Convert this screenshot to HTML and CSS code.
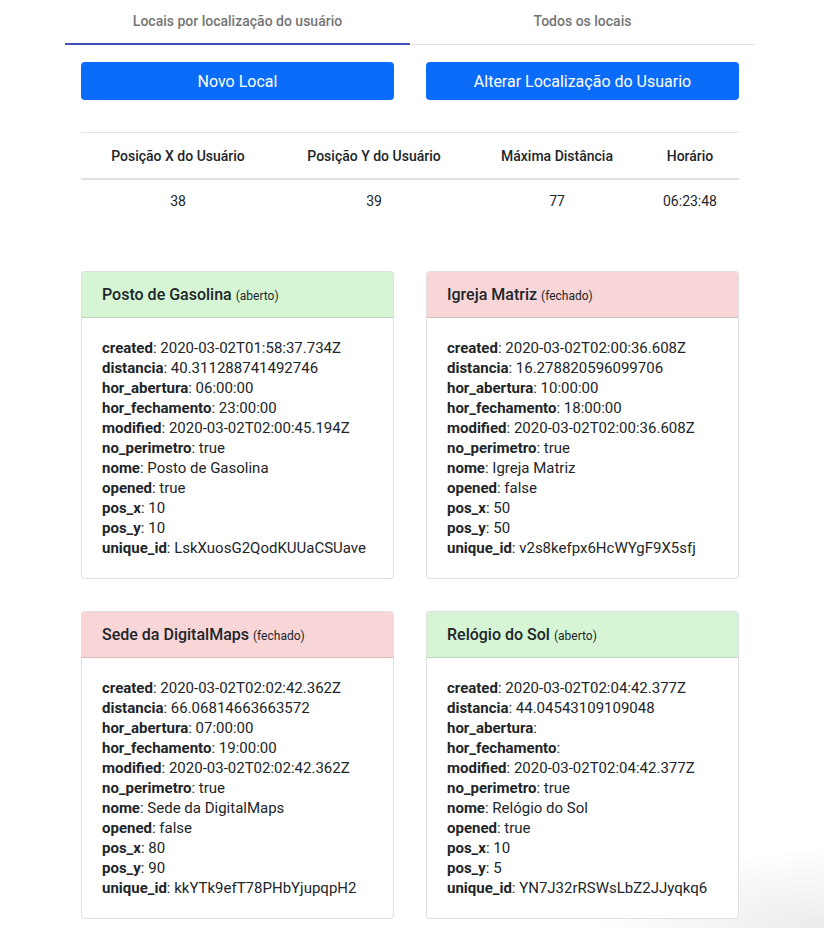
FILE: index.html
```html
<!DOCTYPE html>
<html lang="pt-BR">
<head>
<meta charset="utf-8">
<title>Locais</title>
<link rel="stylesheet" href="styles.css">
</head>
<body>
<div class="page">
  <div class="tabs">
    <div class="tab active">Locais por localização do usuário</div>
    <div class="tab">Todos os locais</div>
  </div>
  <div class="content">
    <div class="actions">
      <button class="btn">Novo Local</button>
      <button class="btn">Alterar Localização do Usuario</button>
    </div>
    <table class="info">
      <thead>
        <tr><th class="c1">Posição X do Usuário</th><th class="c2">Posição Y do Usuário</th><th class="c3">Máxima Distância</th><th class="c4">Horário</th></tr>
      </thead>
      <tbody>
        <tr><td>38</td><td>39</td><td>77</td><td>06:23:48</td></tr>
      </tbody>
    </table>
    <div class="cards">
      <div class="card">
        <div class="card-header open">Posto de Gasolina <small>(aberto)</small></div>
        <div class="card-body">
          <div><b>created</b>: 2020-03-02T01:58:37.734Z</div>
          <div><b>distancia</b>: 40.311288741492746</div>
          <div><b>hor_abertura</b>: 06:00:00</div>
          <div><b>hor_fechamento</b>: 23:00:00</div>
          <div><b>modified</b>: 2020-03-02T02:00:45.194Z</div>
          <div><b>no_perimetro</b>: true</div>
          <div><b>nome</b>: Posto de Gasolina</div>
          <div><b>opened</b>: true</div>
          <div><b>pos_x</b>: 10</div>
          <div><b>pos_y</b>: 10</div>
          <div><b>unique_id</b>: LskXuosG2QodKUUaCSUave</div>
        </div>
      </div>
      <div class="card">
        <div class="card-header closed">Igreja Matriz <small>(fechado)</small></div>
        <div class="card-body">
          <div><b>created</b>: 2020-03-02T02:00:36.608Z</div>
          <div><b>distancia</b>: 16.278820596099706</div>
          <div><b>hor_abertura</b>: 10:00:00</div>
          <div><b>hor_fechamento</b>: 18:00:00</div>
          <div><b>modified</b>: 2020-03-02T02:00:36.608Z</div>
          <div><b>no_perimetro</b>: true</div>
          <div><b>nome</b>: Igreja Matriz</div>
          <div><b>opened</b>: false</div>
          <div><b>pos_x</b>: 50</div>
          <div><b>pos_y</b>: 50</div>
          <div><b>unique_id</b>: v2s8kefpx6HcWYgF9X5sfj</div>
        </div>
      </div>
      <div class="card">
        <div class="card-header closed">Sede da DigitalMaps <small>(fechado)</small></div>
        <div class="card-body">
          <div><b>created</b>: 2020-03-02T02:02:42.362Z</div>
          <div><b>distancia</b>: 66.06814663663572</div>
          <div><b>hor_abertura</b>: 07:00:00</div>
          <div><b>hor_fechamento</b>: 19:00:00</div>
          <div><b>modified</b>: 2020-03-02T02:02:42.362Z</div>
          <div><b>no_perimetro</b>: true</div>
          <div><b>nome</b>: Sede da DigitalMaps</div>
          <div><b>opened</b>: false</div>
          <div><b>pos_x</b>: 80</div>
          <div><b>pos_y</b>: 90</div>
          <div><b>unique_id</b>: kkYTk9efT78PHbYjupqpH2</div>
        </div>
      </div>
      <div class="card">
        <div class="card-header open">Relógio do Sol <small>(aberto)</small></div>
        <div class="card-body">
          <div><b>created</b>: 2020-03-02T02:04:42.377Z</div>
          <div><b>distancia</b>: 44.04543109109048</div>
          <div><b>hor_abertura</b>:</div>
          <div><b>hor_fechamento</b>:</div>
          <div><b>modified</b>: 2020-03-02T02:04:42.377Z</div>
          <div><b>no_perimetro</b>: true</div>
          <div><b>nome</b>: Relógio do Sol</div>
          <div><b>opened</b>: true</div>
          <div><b>pos_x</b>: 10</div>
          <div><b>pos_y</b>: 5</div>
          <div><b>unique_id</b>: YN7J32rRSWsLbZ2JJyqkq6</div>
        </div>
      </div>
    </div>
  </div>
</div>
</body>
</html>
```

FILE: styles.css
```css
html {
  background: #fff radial-gradient(ellipse 230px 80px at 100% 100%, #ebebeb 0%, rgba(255,255,255,0) 100%) no-repeat;
  min-height: 100%;
}
body {
  margin: 0;
  font-family: Roboto, "Noto Sans", Arial, sans-serif;
  color: #212529;
  font-size: 14px;
}
.page {
  width: 690px;
  margin-left: 65px;
}
.tabs {
  display: flex;
  height: 45px;
  box-shadow: inset 0 -1px 0 #e0e0e0;
}
.tab {
  flex: 1;
  display: flex;
  align-items: center;
  justify-content: center;
  padding-bottom: 3px;
  box-sizing: border-box;
  font-size: 14px;
  font-weight: 500;
  color: #757575;
}
.tab.active {
  border-bottom: 2px solid #3f51b5;
  padding-bottom: 1px;
}
.content {
  padding: 0 16px;
}
.actions {
  display: grid;
  grid-template-columns: 1fr 1fr;
  gap: 32px;
  margin-top: 17px;
}
.btn {
  height: 38px;
  border: 0;
  border-radius: 4px;
  background: #0a6cf9;
  color: #fff;
  font-family: Roboto, "Noto Sans", Arial, sans-serif;
  font-size: 16px;
  font-weight: 400;
  padding: 0;
}
.info {
  width: 658px;
  margin-top: 32px;
  border-collapse: collapse;
  table-layout: fixed;
  text-align: center;
}
.info th {
  height: 45px;
  padding: 0;
  font-weight: 500;
  font-size: 14px;
  border-top: 1px solid #dee2e6;
  border-bottom: 2px solid #dee2e6;
  vertical-align: middle;
}
.info td {
  height: 42px;
  padding: 0;
  font-size: 14px;
  vertical-align: middle;
}
.c1 { width: 194px; }
.c2 { width: 198px; }
.c3 { width: 168px; }
.c4 { width: 98px; }
.cards {
  display: grid;
  grid-template-columns: 1fr 1fr;
  column-gap: 32px;
  row-gap: 32px;
  margin-top: 49px;
}
.card {
  border: 1px solid rgba(0,0,0,0.125);
  border-radius: 4px;
  background: #fff;
  overflow: hidden;
}
.card-header {
  height: 45px;
  padding: 0 20px;
  display: flex;
  align-items: center;
  font-size: 16px;
  font-weight: 500;
  border-bottom: 1px solid rgba(0,0,0,0.125);
}
.card-header small {
  font-size: 12px;
  font-weight: 400;
  margin-left: 4px;
  margin-top: 2px;
}
.card-header.open { background: #d5f5d5; }
.card-header.closed { background: #f8d6d7; }
.card-body {
  padding: 20px;
  line-height: 20px;
  font-size: 15px;
}
.card-body b {
  font-weight: 700;
}
```
